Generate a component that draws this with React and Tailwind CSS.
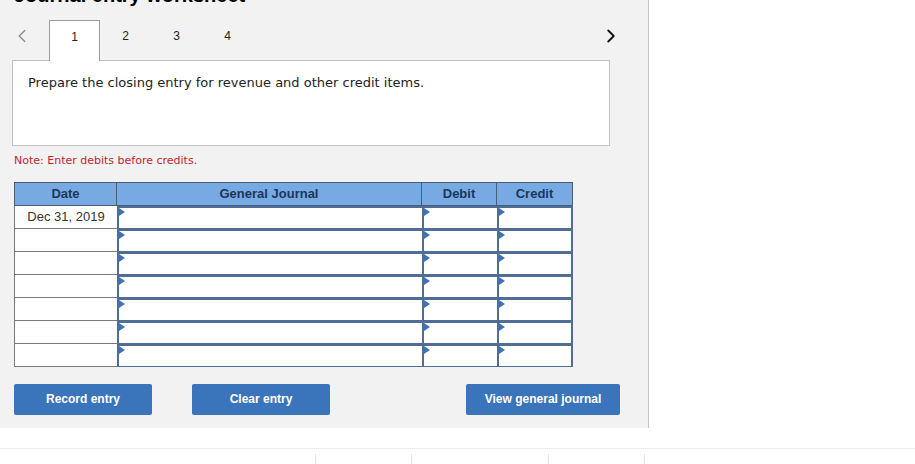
import { ChevronLeft, ChevronRight } from "lucide-react";

const rows = ["Dec 31, 2019", "", "", "", "", "", ""];

function Marker() {
  return (
    <span className="absolute left-0 top-0 h-0 w-0 border-y-[4px] border-l-[6px] border-y-transparent border-l-[#3d72b4]" />
  );
}

function InputCell({ last, w }) {
  return (
    <div
      className={`relative h-[23px] bg-white border-t-2 border-l-2 border-b border-[#4f6e97] ${
        last ? "border-r-2" : ""
      } ${w}`}>
      <Marker />
    </div>
  );
}

export default function App() {
  const tabs = ["1", "2", "3", "4"];

  return (
    <div className="w-[915px] h-[464px] bg-white overflow-hidden font-['Liberation_Sans',Arial,sans-serif]">
      {/* worksheet panel */}
      <div className="w-[649px] h-[428px] bg-[#f2f2f2] border-r border-[#c6c6c6] overflow-hidden">
        <h1 className="-mt-[15px] ml-[14px] h-[20px] text-[20px] leading-none font-bold text-black">
          Journal entry worksheet
        </h1>

        {/* tabs */}
        <div className="mt-[15px] flex items-end h-[40px]">
          <div className="w-[49px] h-[40px] flex items-start pt-[5px] pl-[11px]">
            <ChevronLeft size={22} strokeWidth={1.4} className="text-[#8a8a8a]" />
          </div>
          {tabs.map((t, i) => (
            <div
              key={t}
              className={`w-[51px] h-[40px] flex justify-center pt-[9px] text-[12px] leading-[14px] text-[#222] ${
                i === 0
                  ? "relative z-10 -mb-px h-[41px] bg-white border border-b-0 border-[#9c9c9c]"
                  : ""
              }`}>
              {t}
            </div>
          ))}
          <div className="flex-1" />
          <div className="w-[48px] h-[40px] flex items-start pt-[5px]">
            <ChevronRight size={22} strokeWidth={2} className="text-[#111]" />
          </div>
        </div>

        {/* question box */}
        <div className="ml-[12px] w-[598px] h-[86px] bg-white border border-[#c3c3c3] pl-[15px] pt-[14px] font-['DejaVu_Sans',Verdana,sans-serif] text-[13px] leading-[16px] text-[#222]">
          Prepare the closing entry for revenue and other credit items.
        </div>

        <p className="ml-[14px] mt-[7px] font-['DejaVu_Sans',Verdana,sans-serif] text-[11px] text-[#c0262b]">
          Note: Enter debits before credits.
        </p>

        {/* journal table */}
        <div className="ml-[14px] mt-[12px] w-[559px]">
          <div className="flex h-[24px] bg-[#77aae2] border border-[#4b5d73] text-[13px] font-bold text-[#1d3659]">
            <div className="w-[102px] flex items-center justify-center border-r border-[#4b5d73]">
              Date
            </div>
            <div className="w-[305px] flex items-center justify-center border-r border-[#4b5d73]">
              General Journal
            </div>
            <div className="w-[75px] flex items-center justify-center border-r border-[#4b5d73]">
              Debit
            </div>
            <div className="flex-1 flex items-center justify-center">Credit</div>
          </div>
          {rows.map((d, i) => (
            <div key={i} className="flex">
              <div className="w-[103px] h-[23px] bg-white border-l border-b border-[#7a7a7a] flex items-center justify-center text-[13px] text-[#333]">
                {d}
              </div>
              <InputCell w="w-[305px]" />
              <InputCell w="w-[75px]" />
              <InputCell w="w-[76px]" last />
            </div>
          ))}
        </div>

        {/* buttons */}
        <div className="ml-[14px] mt-[17px] flex w-[606px]">
          <button className="w-[138px] h-[31px] rounded-[2px] bg-[#3a74ba] text-white text-[12px] font-bold">
            Record entry
          </button>
          <button className="ml-[40px] w-[138px] h-[31px] rounded-[2px] bg-[#3a74ba] text-white text-[12px] font-bold">
            Clear entry
          </button>
          <div className="flex-1" />
          <button className="w-[154px] h-[31px] rounded-[2px] bg-[#3a74ba] text-white text-[12px] font-bold">
            View general journal
          </button>
        </div>
      </div>

      {/* below the panel */}
      <div className="mt-[20px] border-t border-[#ececec]" />
      <div className="mt-[5px] flex h-[12px]">
        <div className="w-[315px]" />
        <div className="w-[96px] border-l border-[#e4e4e4]" />
        <div className="w-[137px] border-l border-[#e4e4e4]" />
        <div className="w-[96px] border-l border-[#e4e4e4]" />
        <div className="flex-1 border-l border-[#e4e4e4]" />
      </div>
    </div>
  );
}
